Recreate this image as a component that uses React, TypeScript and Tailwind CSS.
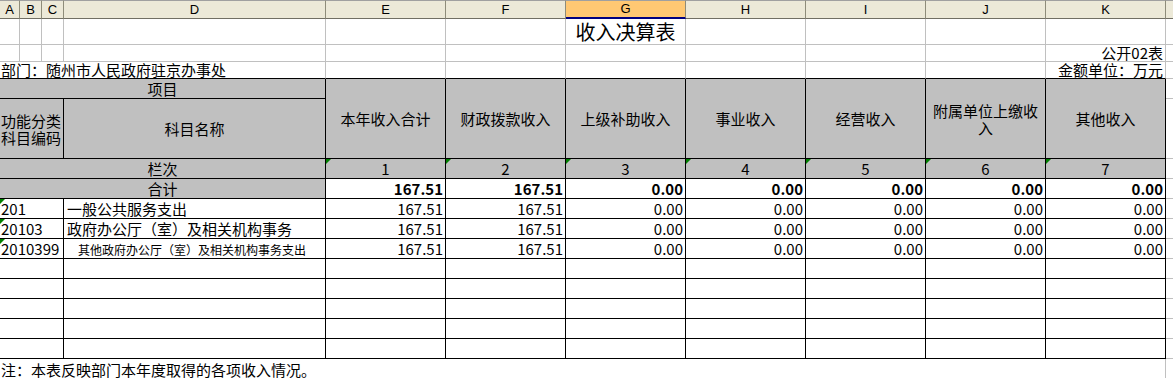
import React from 'react'

const COLS = ['A', 'B', 'C', 'D', 'E', 'F', 'G', 'H', 'I', 'J', 'K']

const HEADS = ['本年收入合计', '财政拨款收入', '上级补助收入', '事业收入', '经营收入', '附属单位上缴收入', '其他收入']

interface Row {
  code: string
  name: string
  small?: boolean
  vals: string[]
}

const zeros = ['0.00', '0.00', '0.00', '0.00', '0.00']

const ROWS: Row[] = [
  { code: '201', name: '一般公共服务支出', vals: ['167.51', '167.51', ...zeros] },
  { code: '20103', name: '政府办公厅（室）及相关机构事务', vals: ['167.51', '167.51', ...zeros] },
  { code: '2010399', name: '其他政府办公厅（室）及相关机构事务支出', small: true, vals: ['167.51', '167.51', ...zeros] },
]

const TOTAL = ['167.51', '167.51', ...zeros]

function Tri() {
  return (
    <span className="absolute left-0 top-0 h-0 w-0 border-t-[5px] border-r-[5px] border-t-[#008000] border-r-transparent" />
  )
}

const grid = 'border-r border-b border-[#c0c0c0]'
const table = 'border-r border-b border-black'
const gray = 'bg-[#c0c0c0]'

export default function App() {
  return (
    <div className="h-[378px] w-[1173px] overflow-hidden bg-white text-black font-['Noto_Sans_CJK_SC',sans-serif] text-[15px]">
      <div className="grid grid-cols-[20px_22px_22px_262px_repeat(7,120px)_1fr] grid-rows-[19px_26px_17px_17px_20px_60px_20px_20px_repeat(8,20px)_20px]">
        {/* column letters */}
        {COLS.map((c) => (
          <div
            key={c}
            className={
              c === 'G'
                ? "flex items-center justify-center border-t border-r border-b-2 border-t-[#a0a0a0] border-r-[#8e8c7a] border-b-[#000080] bg-[#ffc873] font-['Liberation_Sans',Arial,sans-serif] text-[13px]"
                : "flex items-center justify-center border-t border-r border-b border-t-[#a0a0a0] border-r-[#8e8c7a] border-b-[#716f64] bg-[#ece9d8] font-['Liberation_Sans',Arial,sans-serif] text-[13px]"
            }
          >
            {c}
          </div>
        ))}
        <div className="border-t border-b border-t-[#a0a0a0] border-b-[#716f64] bg-[#ece9d8]" />

        {/* title row */}
        {COLS.map((c) => (
          <div key={c} className={`${grid} flex items-center justify-center text-[20px] leading-none`}>
            {c === 'G' ? '收入决算表' : null}
          </div>
        ))}
        <div className="border-b border-[#c0c0c0]" />

        {/* 公开02表 */}
        {COLS.map((c) => (
          <div key={c} className={`${grid} flex items-end justify-end pr-[2px] leading-[16px]`}>
            {c === 'K' ? '公开02表' : null}
          </div>
        ))}
        <div className="border-b border-[#c0c0c0]" />

        {/* 部门 */}
        <div className="col-span-4 flex items-end whitespace-nowrap border-r border-b border-r-[#c0c0c0] border-b-black pl-px leading-[16px]">
          部门：随州市人民政府驻京办事处
        </div>
        {COLS.slice(4).map((c) => (
          <div key={c} className="flex items-end justify-end border-r border-b border-r-[#c0c0c0] border-b-black pr-[2px] leading-[16px]">
            {c === 'K' ? '金额单位：万元' : null}
          </div>
        ))}
        <div className="border-b border-[#c0c0c0]" />

        {/* header */}
        <div className={`col-span-4 ${table} ${gray} flex items-center justify-center leading-none`}>项目</div>
        {HEADS.map((h) => (
          <div key={h} className={`row-span-2 ${table} ${gray} flex items-center justify-center px-1 text-center leading-[17px]`}>
            <span>{h}</span>
          </div>
        ))}
        <div className="border-b border-[#c0c0c0]" />
        <div className={`col-span-3 ${table} ${gray} flex flex-col justify-center pl-px leading-[17px]`}>
          <span>功能分类</span>
          <span>科目编码</span>
        </div>
        <div className={`${table} ${gray} flex items-center justify-center leading-none`}>科目名称</div>
        <div className="border-b border-[#c0c0c0]" />

        {/* 栏次 */}
        <div className={`col-span-4 ${table} ${gray} flex items-center justify-center leading-none`}>栏次</div>
        {HEADS.map((h, i) => (
          <div key={h} className={`relative ${table} ${gray} flex items-end justify-center leading-[18px]`}>
            <Tri />
            {i + 1}
          </div>
        ))}
        <div className="border-b border-[#c0c0c0]" />

        {/* 合计 */}
        <div className={`col-span-4 ${table} ${gray} flex items-center justify-center leading-none`}>合计</div>
        {TOTAL.map((v, i) => (
          <div key={i} className={`${table} flex items-end justify-end pr-[2px] font-bold leading-[18px]`}>
            {v}
          </div>
        ))}
        <div className="border-b border-[#c0c0c0]" />

        {/* data rows */}
        {ROWS.map((r) => (
          <React.Fragment key={r.code}>
            <div className={`relative col-span-3 ${table} flex items-end pl-px leading-[18px]`}>
              <Tri />
              {r.code}
            </div>
            <div
              className={
                r.small
                  ? `${table} flex items-end whitespace-nowrap pl-[14px] text-[12px] leading-[17px]`
                  : `${table} flex items-end whitespace-nowrap pl-[3px] leading-[18px]`
              }
            >
              {r.name}
            </div>
            {r.vals.map((v, i) => (
              <div key={i} className={`${table} flex items-end justify-end pr-[2px] leading-[18px]`}>
                {v}
              </div>
            ))}
            <div className="border-b border-[#c0c0c0]" />
          </React.Fragment>
        ))}
        {[0, 1, 2, 3, 4].map((k) => (
          <React.Fragment key={k}>
            <div className={`col-span-3 ${table}`} />
            <div className={table} />
            {HEADS.map((h) => (
              <div key={h} className={table} />
            ))}
            <div className="border-b border-[#c0c0c0]" />
          </React.Fragment>
        ))}

        {/* note */}
        <div className="col-span-11 flex items-end border-r border-[#c0c0c0] pl-px leading-[18px]">
          注：本表反映部门本年度取得的各项收入情况。
        </div>
        <div />
      </div>
    </div>
  )
}
